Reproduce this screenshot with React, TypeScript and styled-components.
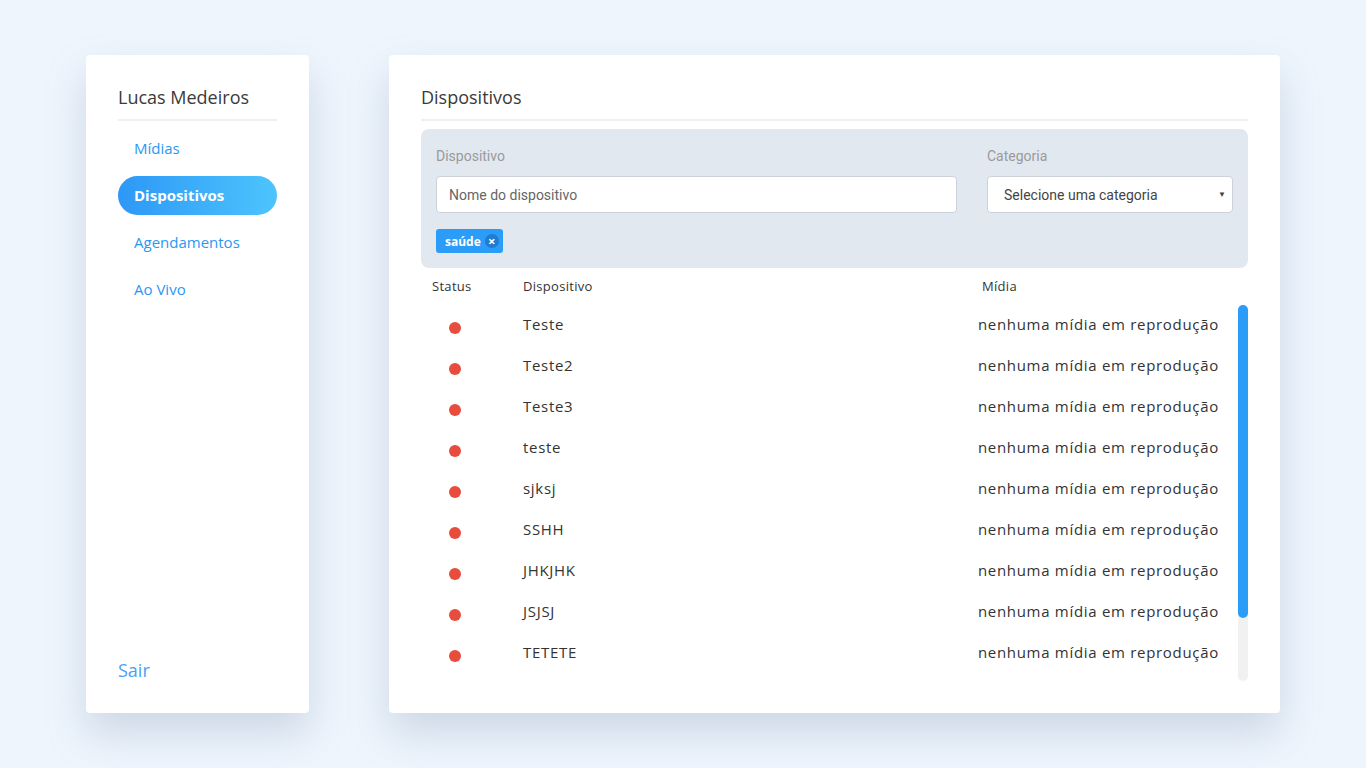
import React from "react";
import styled, { createGlobalStyle } from "styled-components";

const GlobalStyle = createGlobalStyle`
  * { box-sizing: border-box; }
  html, body {
    margin: 0;
    padding: 0;
    background: #eef5fd;
    font-family: "Open Sans", "Noto Sans", sans-serif;
  }
`;

interface IDevice {
  name: string;
  online: boolean;
}

const devices: IDevice[] = [
  { name: "Teste", online: false },
  { name: "Teste2", online: false },
  { name: "Teste3", online: false },
  { name: "teste", online: false },
  { name: "sjksj", online: false },
  { name: "SSHH", online: false },
  { name: "JHKJHK", online: false },
  { name: "JSJSJ", online: false },
  { name: "TETETE", online: false },
  { name: "tv sala", online: false },
  { name: "recepção", online: false },
];

const navItems = ["Mídias", "Dispositivos", "Agendamentos", "Ao Vivo"];

const ROW_HEIGHT = 41;
const VISIBLE_HEIGHT = 376;

const App = () => {
  const contentHeight = devices.length * ROW_HEIGHT;
  const thumbHeight = Math.min(1, VISIBLE_HEIGHT / contentHeight) * VISIBLE_HEIGHT;

  return (
    <>
      <GlobalStyle />
      <Page>
        <Sidebar>
          <UserName>Lucas Medeiros</UserName>
          <Nav>
            {navItems.map((item) => (
              <NavItem key={item} active={item === "Dispositivos"}>
                {item}
              </NavItem>
            ))}
          </Nav>
          <Logout>Sair</Logout>
        </Sidebar>
        <Main>
          <Title>Dispositivos</Title>
          <FilterBox>
            <FilterRow>
              <Field grow>
                <Label>Dispositivo</Label>
                <Input placeholder="Nome do dispositivo" />
              </Field>
              <Field>
                <Label>Categoria</Label>
                <SelectBox>
                  <span>Selecione uma categoria</span>
                  <Caret>▼</Caret>
                </SelectBox>
              </Field>
            </FilterRow>
            <Chips>
              <Chip>
                saúde
                <ChipClose>×</ChipClose>
              </Chip>
            </Chips>
          </FilterBox>
          <TableHead>
            <StatusHead>Status</StatusHead>
            <NameHead>Dispositivo</NameHead>
            <MediaHead>Mídia</MediaHead>
          </TableHead>
          <ListWrap>
            <Rows>
              {devices.map((d, i) => (
                <Row key={i}>
                  <StatusCell>
                    <Dot online={d.online} />
                  </StatusCell>
                  <NameCell>{d.name}</NameCell>
                  <MediaCell>nenhuma mídia em reprodução</MediaCell>
                </Row>
              ))}
            </Rows>
            <ScrollTrack>
              <ScrollThumb style={{ height: thumbHeight }} />
            </ScrollTrack>
          </ListWrap>
        </Main>
      </Page>
    </>
  );
};

export default App;

const Page = styled.div`
  display: flex;
  gap: 80px;
  padding: 55px 86px;
  height: 768px;
`;

const Card = styled.div`
  background: #ffffff;
  border-radius: 4px;
  box-shadow: 0 20px 40px rgba(120, 140, 170, 0.28);
  height: 658px;
`;

const Sidebar = styled(Card)`
  width: 223px;
  padding: 30px 32px 31px 32px;
  display: flex;
  flex-direction: column;
`;

const UserName = styled.h2`
  margin: 0;
  font-size: 18px;
  font-weight: 400;
  color: #3a3a3a;
  line-height: 24px;
  padding-bottom: 10px;
  border-bottom: 2px solid #edf1f5;
`;

const Nav = styled.div`
  display: flex;
  flex-direction: column;
  gap: 8px;
  margin-top: 8px;
`;

const NavItem = styled.div<{ active?: boolean }>`
  height: 39px;
  line-height: 39px;
  padding: 0 16px;
  border-radius: 20px;
  font-size: 15px;
  font-weight: ${(p) => (p.active ? 700 : 400)};
  color: ${(p) => (p.active ? "#ffffff" : "#2b97f5")};
  background: ${(p) =>
    p.active ? "linear-gradient(90deg, #2d98f6 0%, #4dc4fd 100%)" : "transparent"};
`;

const Logout = styled.div`
  margin-top: auto;
  font-size: 18px;
  color: #4a9ff5;
`;

const Main = styled(Card)`
  width: 891px;
  padding: 30px 32px 32px 32px;
  display: flex;
  flex-direction: column;
`;

const Title = styled.h1`
  margin: 0;
  font-size: 18px;
  font-weight: 400;
  color: #3a3a3a;
  line-height: 24px;
  padding-bottom: 10px;
  border-bottom: 2px solid #edf1f5;
`;

const FilterBox = styled.div`
  margin-top: 8px;
  background: #e1e8ef;
  border-radius: 8px;
  padding: 17px 15px 15px 15px;
  height: 139px;
  flex-shrink: 0;
`;

const FilterRow = styled.div`
  display: flex;
  gap: 30px;
`;

const Field = styled.div<{ grow?: boolean }>`
  display: flex;
  flex-direction: column;
  width: ${(p) => (p.grow ? "521px" : "246px")};
`;

const Label = styled.label`
  font-family: Roboto, "Liberation Sans", sans-serif;
  font-size: 14px;
  color: #9a9a9a;
  line-height: 20px;
  margin-bottom: 10px;
`;

const Input = styled.input`
  height: 37px;
  border: 1px solid #ccd2d8;
  border-radius: 4px;
  padding: 0 12px;
  font-family: Roboto, "Liberation Sans", sans-serif;
  font-size: 14px;
  color: #555;
  background: #ffffff;
  outline: none;
  &::placeholder {
    color: #666;
  }
`;

const SelectBox = styled.div`
  height: 37px;
  border: 1px solid #ccd2d8;
  border-radius: 4px;
  padding: 0 6px 0 16px;
  display: flex;
  align-items: center;
  justify-content: space-between;
  font-family: Roboto, "Liberation Sans", sans-serif;
  font-size: 14px;
  color: #444;
  background: #ffffff;
`;

const Caret = styled.span`
  font-size: 8px;
  color: #444;
`;

const Chips = styled.div`
  display: flex;
  margin-top: 16px;
`;

const Chip = styled.span`
  display: inline-flex;
  align-items: center;
  gap: 4px;
  height: 24px;
  padding: 0 4px 0 9px;
  border-radius: 3px;
  background: #2b9cf7;
  color: #ffffff;
  font-size: 12px;
  font-weight: 700;
`;

const ChipClose = styled.span`
  width: 14px;
  height: 14px;
  border-radius: 50%;
  background: #1e7dd0;
  display: inline-flex;
  align-items: center;
  justify-content: center;
  font-size: 13px;
  line-height: 1;
  font-weight: 700;
`;

const TableHead = styled.div`
  display: flex;
  align-items: center;
  height: 36px;
  flex-shrink: 0;
  font-size: 13px;
  letter-spacing: 0.3px;
  color: #333;
`;

const StatusHead = styled.div`
  width: 102px;
  padding-left: 11px;
`;

const NameHead = styled.div`
  flex: 1;
`;

const MediaHead = styled.div`
  width: 266px;
`;

const ListWrap = styled.div`
  flex: 1;
  min-height: 0;
  display: flex;
  margin-top: 1px;
`;

const Rows = styled.div`
  flex: 1;
  overflow: hidden;
  margin-top: -2px;
`;

const ScrollTrack = styled.div`
  width: 10px;
  margin-left: 19px;
  background: #f1f1f1;
  border-radius: 5px;
  flex-shrink: 0;
`;

const ScrollThumb = styled.div`
  width: 10px;
  background: #2b9cf7;
  border-radius: 5px;
`;

const Row = styled.div`
  display: flex;
  align-items: center;
  height: 41px;
  font-size: 15px;
  color: #333;
  letter-spacing: 0.7px;
`;

const StatusCell = styled.div`
  width: 102px;
  display: flex;
  padding-left: 28px;
  padding-top: 8px;
`;

const Dot = styled.span<{ online?: boolean }>`
  width: 12px;
  height: 12px;
  border-radius: 50%;
  background: ${(p) => (p.online ? "#2ecc71" : "#e74c3c")};
`;

const NameCell = styled.div`
  flex: 1;
`;

const MediaCell = styled.div`
  text-align: right;
  white-space: nowrap;
`;
